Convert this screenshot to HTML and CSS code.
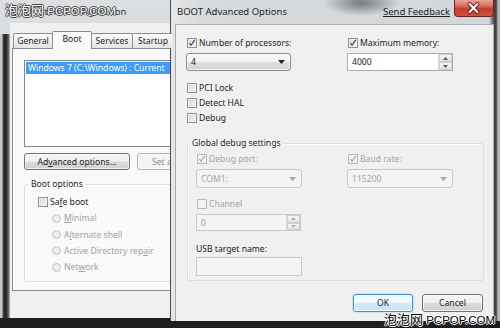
FILE: index.html
```html
<!DOCTYPE html>
<html lang="en">

<head>
    <meta charset="UTF-8">
    <meta name="viewport" content="width=device-width, initial-scale=1.0">
    <title>BOOT Advanced Options</title>
    <link rel="stylesheet" href="styles.css">
</head>

<body>
    <div class="desk">

        <!-- window behind: System Configuration -->
        <div class="win back">
            <div class="back-title">
                <span class="back-caption">System Configuration</span>
            </div>
            <div class="back-client">
                <div class="tabs">
                    <div class="tab tab-general">General</div>
                    <div class="tab tab-sel">Boot</div>
                    <div class="tab tab-services">Services</div>
                    <div class="tab tab-startup">Startup</div>
                </div>
                <div class="panel">
                    <div class="listbox">
                        <div class="list-item">Windows 7 (C:\Windows) : Current</div>
                    </div>
                    <div class="btn-row">
                        <button class="btn btn-wide">Ad<u>v</u>anced options...</button>
                        <button class="btn btn-wide btn-dis">Set as default</button>
                    </div>
                    <fieldset class="group boot-group">
                        <legend>Boot options</legend>
                        <label class="check"><span class="cb"></span><span>Sa<u>f</u>e boot</span></label>
                        <div class="radios">
                            <label class="radio"><span class="rb"></span><span><u>M</u>inimal</span></label>
                            <label class="radio"><span class="rb"></span><span>A<u>l</u>ternate shell</span></label>
                            <label class="radio"><span class="rb"></span><span>Active Directory rep<u>a</u>ir</span></label>
                            <label class="radio"><span class="rb"></span><span>Net<u>w</u>ork</span></label>
                        </div>
                    </fieldset>
                </div>
            </div>
        </div>

        <!-- dialog in front -->
        <div class="win front">
            <div class="title-bar">
                <span class="title">BOOT Advanced Options</span>
                <span class="feedback">Send Feedback</span>
                <span class="close">
                    <svg width="40" height="17" viewBox="0 0 40 17">
                        <path d="M16 4 L24 12 M24 4 L16 12" stroke="#5a1010" stroke-width="4" stroke-linecap="round" />
                        <path d="M16 4 L24 12 M24 4 L16 12" stroke="#fff" stroke-width="2.2" stroke-linecap="round" />
                    </svg>
                </span>
            </div>
            <div class="client">
                <div class="cols">
                    <div class="col">
                        <label class="check"><span class="cb on"><svg viewBox="0 0 10 10"><path d="M1.6 5 L3.8 7.8 L8.4 1.2" /></svg></span><span>Number of processors:</span></label>
                        <div class="combo">
                            <span>4</span>
                            <svg width="7" height="4" viewBox="0 0 7 4"><path d="M0 0 H7 L3.5 4 Z" /></svg>
                        </div>
                        <div class="opts">
                            <label class="check"><span class="cb"></span><span>PCI Lock</span></label>
                            <label class="check"><span class="cb"></span><span>Detect HAL</span></label>
                            <label class="check"><span class="cb"></span><span>Debug</span></label>
                        </div>
                    </div>
                    <div class="col">
                        <label class="check"><span class="cb on"><svg viewBox="0 0 10 10"><path d="M1.6 5 L3.8 7.8 L8.4 1.2" /></svg></span><span>Maximum memory:</span></label>
                        <div class="spin">
                            <span class="spin-val">4000</span>
                            <span class="spin-btns">
                                <span><svg width="5" height="3" viewBox="0 0 5 3"><path d="M0 3 H5 L2.5 0 Z" /></svg></span>
                                <span><svg width="5" height="3" viewBox="0 0 5 3"><path d="M0 0 H5 L2.5 3 Z" /></svg></span>
                            </span>
                        </div>
                    </div>
                </div>

                <fieldset class="group debug-group">
                    <legend>Global debug settings</legend>
                    <div class="debug-cols">
                        <div class="col">
                            <label class="check dis"><span class="cb on"><svg viewBox="0 0 10 10"><path d="M1.6 5 L3.8 7.8 L8.4 1.2" /></svg></span><span>Debug port:</span></label>
                            <div class="combo combo-dis">
                                <span>COM1:</span>
                                <svg width="7" height="4" viewBox="0 0 7 4"><path d="M0 0 H7 L3.5 4 Z" /></svg>
                            </div>
                            <label class="check dis channel"><span class="cb"></span><span>Channel</span></label>
                            <div class="spin spin-dis">
                                <span class="spin-val">0</span>
                                <span class="spin-btns">
                                    <span><svg width="5" height="3" viewBox="0 0 5 3"><path d="M0 3 H5 L2.5 0 Z" /></svg></span>
                                    <span><svg width="5" height="3" viewBox="0 0 5 3"><path d="M0 0 H5 L2.5 3 Z" /></svg></span>
                                </span>
                            </div>
                            <div class="field-label">USB target name:</div>
                            <div class="textbox"></div>
                        </div>
                        <div class="col">
                            <label class="check dis"><span class="cb on"><svg viewBox="0 0 10 10"><path d="M1.6 5 L3.8 7.8 L8.4 1.2" /></svg></span><span>Baud rate:</span></label>
                            <div class="combo combo-dis">
                                <span>115200</span>
                                <svg width="7" height="4" viewBox="0 0 7 4"><path d="M0 0 H7 L3.5 4 Z" /></svg>
                            </div>
                        </div>
                    </div>
                </fieldset>

                <div class="actions">
                    <button class="btn btn-ok">OK</button>
                    <button class="btn btn-cancel">Cancel</button>
                </div>
            </div>
        </div>

        <span class="mark mark-top"><span class="mark-cn">泡泡网</span> PCPOP.COM</span>
        <span class="mark mark-bottom"><span class="mark-cn">泡泡网</span> PCPOP.COM</span>
    </div>
</body>

</html>
```

FILE: styles.css
```css
* {
    box-sizing: border-box;
}

body {
    margin: 0;
    background-color: #222;
    font-family: "Noto Sans", "Open Sans", sans-serif;
    font-size: 8.6px;
    color: #1b1b1b;
}

.desk {
    position: relative;
    width: 500px;
    height: 328px;
    overflow: hidden;
    background: linear-gradient(#3a3a3a, #1e1e1e);
}

.win {
    position: absolute;
    top: 0;
}

/* ---------- back window ---------- */

.back {
    left: 0;
    width: 172px;
    height: 318px;
    overflow: hidden;
    display: flex;
    flex-direction: column;
    padding-left: 10px;
    background:
        linear-gradient(90deg, #c4c7ca 0 2px, #4a4a4a 3px, #1c1c1c 5px, #3a3a3a 7px, #777 9px, #c8cbce 10px) 0 34px / 10px 100% no-repeat,
        linear-gradient(#dcdfe2, #cdd1d5);
}

.back-title {
    height: 23px;
    padding: 5px 0 0 20px;
}

.back-caption {
    font-size: 9.5px;
    color: #333;
}

.back-client {
    flex: 1;
    background-color: #f0f0f0;
    padding: 8px 0 0 2px;
}

.tabs {
    display: flex;
    align-items: flex-end;
    height: 18px;
    padding-left: 1px;
    margin-bottom: -1px;
    position: relative;
    z-index: 1;
}

.tab {
    height: 15px;
    flex: none;
    margin-bottom: 1px;
    margin-right: -1px;
    border: 1px solid #898c95;
    border-bottom: none;
    border-radius: 2px 2px 0 0;
    background: linear-gradient(#fbfbfb, #e4e4e4);
    line-height: 14px;
    text-align: center;
}

.tab-general {
    width: 40px;
}

.tab-sel {
    width: 40px;
    height: 18px;
    margin-bottom: 0;
    background: #fafafa;
    line-height: 15px;
    position: relative;
    z-index: 2;
}

.tab-services {
    width: 42px;
}

.tab-startup {
    width: 42px;
}

.panel {
    width: 215px;
    height: 243px;
    border: 1px solid #898c95;
    background-color: #f9f9f9;
    padding: 11px 0 0 11px;
}

.listbox {
    height: 87px;
    border: 1px solid #828790;
    background-color: #fff;
    padding: 1px 1px 0 1px;
}

.list-item {
    height: 12px;
    line-height: 12px;
    padding-left: 2px;
    background-color: #3b9cff;
    color: #fff;
    white-space: nowrap;
    overflow: hidden;
}

.btn-row {
    display: flex;
    gap: 7px;
    margin-top: 6px;
}

.btn {
    height: 17px;
    padding: 0;
    border: 1px solid #707070;
    border-radius: 3px;
    background: linear-gradient(#f3f3f3 0 45%, #e6e6e6 50%, #dcdcdc 52%, #cfcfcf);
    box-shadow: inset 0 0 0 1px rgba(255, 255, 255, 0.7);
    font: inherit;
    color: #1b1b1b;
}

.btn-wide {
    width: 106px;
    flex: none;
}

.btn-dis {
    border-color: #adb2b5;
    background: #f4f4f4;
    color: #8a8a8a;
    text-align: left;
    padding-left: 14px;
}

.group {
    margin: 0;
    border: 1px solid #d5dfe5;
    border-radius: 3px;
    box-shadow: inset 1px 1px 0 #fff;
}

.group legend {
    padding: 0 2px;
    line-height: 13px;
}

.boot-group {
    width: 180px;
    margin-top: 8px;
    padding: 4px 0 5px 12px;
}

.boot-group legend {
    margin-left: -8px;
}

.radios {
    margin-top: 1px;
    padding-left: 15px;
}

.radio {
    display: flex;
    align-items: center;
    gap: 3px;
    height: 16.4px;
    color: #a3a3a3;
    white-space: nowrap;
}

.rb {
    width: 9px;
    height: 9px;
    flex: none;
    border: 1px solid #c6c6c6;
    border-radius: 50%;
    background: radial-gradient(#f4f4f4, #e2e2e2);
}

/* ---------- front dialog ---------- */

.front {
    left: 170px;
    width: 330px;
    height: 321px;
    display: flex;
    flex-direction: column;
    border-left: 1px solid #4c4c4c;
    background:
        radial-gradient(ellipse 38px 13px at 190px 3px, rgba(45, 45, 45, 0.55), rgba(45, 45, 45, 0)),
        linear-gradient(90deg, #e4e6e8 0 5px, #d7dadd 30px, #d3d7da 318px, #4a4a4a 323px, #3c3c3c 325px, #b8b8b8 327px);
}

.title-bar {
    height: 24px;
    display: flex;
    align-items: flex-start;
    padding: 0 6px 0 6px;
}

.title {
    padding-top: 5px;
    font-size: 9.5px;
    line-height: 14px;
    color: #1e1e1e;
}

.feedback {
    margin-left: auto;
    margin-right: 4px;
    padding-top: 5px;
    font-size: 9.5px;
    line-height: 14px;
    text-decoration: underline;
    color: #222;
}

.close {
    width: 40px;
    height: 17px;
    border: 1px solid #6b2424;
    border-top: none;
    border-radius: 0 0 4px 4px;
    background: linear-gradient(#e8a493 0%, #d86a58 40%, #c63a28 55%, #d3503d 100%);
    display: flex;
}

.close svg {
    margin-left: -1px;
}

.client {
    flex: 1;
    margin: 0 6px 0 4px;
    border: 1px solid #a8abae;
    border-bottom: none;
    background-color: #f0f0f0;
    padding-top: 11px;
}

.cols {
    display: grid;
    grid-template-columns: 161px 106px;
    padding-left: 10px;
}

.check {
    display: flex;
    align-items: center;
    gap: 2px;
    height: 14px;
    margin-left: 1px;
    white-space: nowrap;
}

.cb {
    width: 10px;
    height: 10px;
    flex: none;
    border: 1px solid #8e8f8f;
    background: linear-gradient(135deg, #d4d4d4, #f6f6f6);
    box-shadow: inset 0 0 0 1px #f2f2f2;
    display: flex;
}

.cb svg {
    width: 8px;
    height: 8px;
    fill: none;
    stroke: #2f4a86;
    stroke-width: 1.5;
}

.dis {
    color: #a3a3a3;
}

.dis .cb {
    border-color: #b9b9b9;
    background: #f4f4f4;
}

.dis .cb svg {
    stroke: #a9a9a9;
}

.combo {
    display: flex;
    align-items: center;
    justify-content: space-between;
    width: 105px;
    height: 18px;
    margin-top: 3px;
    padding: 0 5px 0 4px;
    border: 1px solid #8a8a8a;
    border-radius: 3px;
    background: linear-gradient(#f5f5f5 0 45%, #e8e8e8 50%, #dedede 52%, #d4d4d4);
    box-shadow: inset 0 0 0 1px rgba(255, 255, 255, 0.7);
}

.combo svg {
    fill: #222;
}

.combo-dis {
    width: 106px;
    height: 19px;
    border-color: #c9c9c9;
    background: #f4f4f4;
    box-shadow: none;
    color: #a3a3a3;
}

.combo-dis svg {
    fill: #a5a5a5;
}

.opts {
    margin-top: 9px;
}

.opts .check {
    height: 15px;
}

.spin {
    display: flex;
    width: 106px;
    height: 18px;
    margin-top: 3px;
    border: 1px solid #abadb3;
    background-color: #fff;
}

.spin-val {
    flex: 1;
    padding-left: 4px;
    line-height: 16px;
}

.spin-btns {
    width: 14px;
    display: flex;
    flex-direction: column;
    border-left: 1px solid #dadada;
}

.spin-btns span {
    flex: 1;
    display: flex;
    align-items: center;
    justify-content: center;
    background: linear-gradient(#f6f6f6, #e4e4e4);
    border: 1px solid #cfcfcf;
}

.spin-btns svg {
    fill: #555;
}

.spin-dis {
    width: 105px;
    height: 17px;
    border-color: #c9c9c9;
    background-color: #f4f4f4;
    color: #a3a3a3;
}

.spin-dis .spin-btns svg {
    fill: #b0b0b0;
}

.debug-group {
    width: 297px;
    margin: 12px 0 0 11px;
    padding: 2px 0 4px 8px;
}

.debug-group legend {
    margin-left: -6px;
}

.debug-cols {
    display: grid;
    grid-template-columns: 151px 106px;
}

.channel {
    margin-top: 9px;
}

.field-label {
    height: 14px;
    line-height: 14px;
    margin-top: 11px;
}

.textbox {
    width: 106px;
    height: 19px;
    margin-top: 1px;
    border: 1px solid #c9c9c9;
    background-color: #f4f4f4;
}

.actions {
    display: flex;
    justify-content: flex-end;
    gap: 9px;
    margin-top: 13px;
    padding-right: 10px;
}

.btn-ok {
    width: 60px;
    height: 18px;
    border-color: #3c8fcf;
    background: linear-gradient(#f1f9fe 0 45%, #e0f1fc 50%, #d0eafb 52%, #c6e4f8);
    box-shadow: inset 0 0 0 1px #fff, 0 0 2px #7ec3f0;
}

.btn-cancel {
    width: 61px;
    height: 18px;
}

/* ---------- watermarks ---------- */

.mark {
    position: absolute;
    z-index: 5;
    font-family: "Liberation Sans", Arial, sans-serif;
    font-size: 11.5px;
    white-space: nowrap;
}

.mark-cn {
    font-family: "Noto Sans CJK SC", sans-serif;
    font-size: 13px;
}

.mark-top {
    left: 5px;
    top: 0;
    color: #fff;
    text-shadow: 1px 0 #444, -1px 0 #444, 0 1px #444, 0 -1px #444;
}

.mark-bottom {
    right: 5px;
    bottom: 0;
    color: #000;
    text-shadow: 1px 0 #fff, -1px 0 #fff, 0 1px #fff, 0 -1px #fff;
}
```
